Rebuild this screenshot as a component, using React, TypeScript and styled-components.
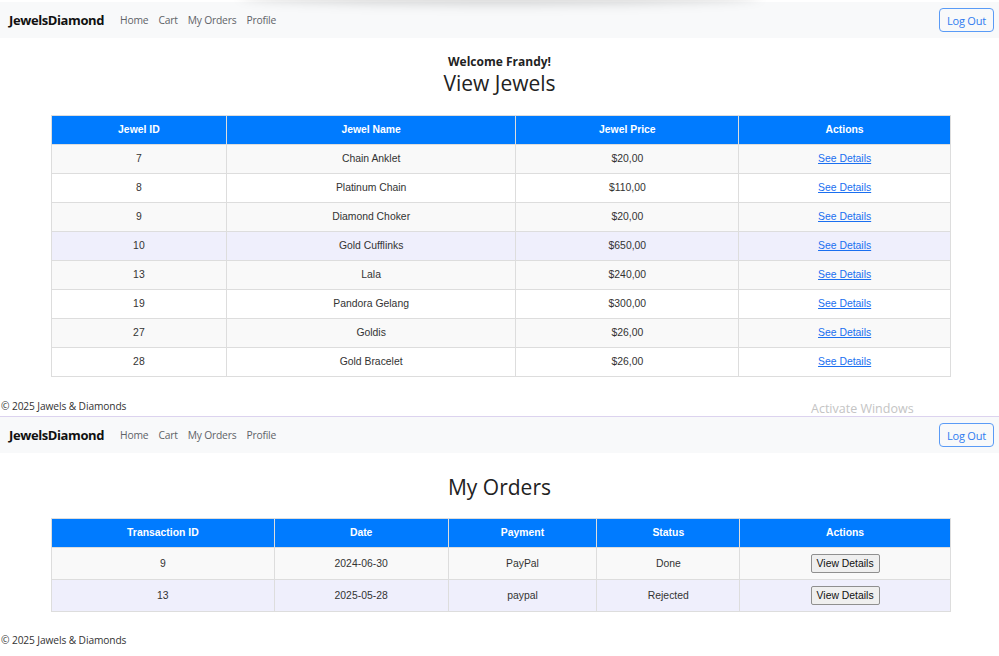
import React from "react";
import styled, { createGlobalStyle } from "styled-components";

const GlobalStyle = createGlobalStyle`
  html, body { margin: 0; padding: 0; background: #ffffff; }
  body { font-family: "Open Sans", "Noto Sans", sans-serif; color: #212529; }
  * { box-sizing: border-box; }
`;

const Page = styled.div`
  position: relative;
  width: 999px;
  height: 656px;
  overflow: hidden;
  display: flex;
  flex-direction: column;
`;

const TopShadow = styled.div`
  position: absolute;
  top: -14px;
  left: 240px;
  width: 520px;
  height: 18px;
  border-radius: 50%;
  background: rgba(0, 0, 0, 0.16);
  filter: blur(6px);
  pointer-events: none;
`;

const Section = styled.section<{ $top?: number }>`
  display: flex;
  flex-direction: column;
  padding-top: ${(p) => p.$top ?? 0}px;
`;

const Navbar = styled.nav<{ $line?: boolean }>`
  height: 36px;
  display: flex;
  align-items: center;
  padding: 0 5px 0 9px;
  background: #f8f9fa;
  border-top: ${(p) => (p.$line ? "1px solid #dcd3ef" : "none")};
  box-sizing: content-box;
`;

const Brand = styled.span`
  font-family: "Open Sans", sans-serif;
  font-weight: 700;
  font-size: 13px;
  color: #111;
  margin-right: 11px;
  letter-spacing: -0.4px;
`;

const NavLinks = styled.div`
  display: flex;
  flex: 1;
`;

const NavLink = styled.a`
  font-size: 10.3px;
  letter-spacing: -0.2px;
  color: #5f6368;
  padding: 0 5px;
  text-decoration: none;
`;

const LogOut = styled.button`
  height: 24px;
  width: 55px;
  padding: 0;
  border: 1px solid #5a9bf6;
  border-radius: 4px;
  background: transparent;
  color: #2f7cf0;
  font-family: "Open Sans", sans-serif;
  font-size: 11px;
  letter-spacing: -0.2px;
`;

const Welcome = styled.div`
  text-align: center;
  font-weight: 700;
  font-size: 12px;
  line-height: 16px;
  margin-top: 16px;
  color: #222;
`;

const Title = styled.h2<{ $mt: number; $mb: number }>`
  margin: ${(p) => p.$mt}px 0 ${(p) => p.$mb}px;
  text-align: center;
  font-weight: 500;
  font-size: 21px;
  line-height: 26px;
  color: #222;
`;

const Table = styled.table`
  width: 900px;
  margin: 0 0 0 51px;
  border-collapse: collapse;
  font-family: "Liberation Sans", Arial, sans-serif;
  font-size: 10.4px;
`;

const Col = styled.col<{ $w: number }>`
  width: ${(p) => p.$w}px;
`;

const Th = styled.th`
  background: #007bff;
  color: #ffffff;
  font-weight: 700;
  border: 1px solid #dddddd;
  padding: 8px;
  line-height: 12px;
  text-align: center;
`;

const Row = styled.tr<{ $bg: string }>`
  background: ${(p) => p.$bg};
`;

const Td = styled.td<{ $py: number }>`
  border: 1px solid #dddddd;
  padding: ${(p) => p.$py}px 8px;
  line-height: 12px;
  text-align: center;
  color: #333333;
`;

const DetailLink = styled.a`
  color: #1a6ff0;
  text-decoration: underline;
`;

const ViewButton = styled.button`
  height: 19px;
  padding: 0 5px;
  font-family: "Liberation Sans", Arial, sans-serif;
  font-size: 10.4px;
  color: #111;
  background: #efefef;
  border: 1px solid #8f8f8f;
  border-radius: 2px;
  vertical-align: middle;
`;

const Footer = styled.div<{ $mt: number }>`
  margin-top: ${(p) => p.$mt}px;
  padding-left: 1px;
  font-size: 10.2px;
  letter-spacing: -0.1px;
  line-height: 14px;
  color: #333;
`;

const Watermark = styled.div`
  position: absolute;
  left: 811px;
  top: 400px;
  font-size: 12.5px;
  color: #c4c4c4;
  pointer-events: none;
`;

const jewels = [
  { id: 7, name: "Chain Anklet", price: "$20,00" },
  { id: 8, name: "Platinum Chain", price: "$110,00" },
  { id: 9, name: "Diamond Choker", price: "$20,00" },
  { id: 10, name: "Gold Cufflinks", price: "$650,00" },
  { id: 13, name: "Lala", price: "$240,00" },
  { id: 19, name: "Pandora Gelang", price: "$300,00" },
  { id: 27, name: "Goldis", price: "$26,00" },
  { id: 28, name: "Gold Bracelet", price: "$26,00" },
];

const orders = [
  { id: 9, date: "2024-06-30", payment: "PayPal", status: "Done" },
  { id: 13, date: "2025-05-28", payment: "paypal", status: "Rejected" },
];

const NavBar: React.FC<{ line?: boolean }> = ({ line }) => (
  <Navbar $line={line}>
    <Brand>JewelsDiamond</Brand>
    <NavLinks>
      <NavLink>Home</NavLink>
      <NavLink>Cart</NavLink>
      <NavLink>My Orders</NavLink>
      <NavLink>Profile</NavLink>
    </NavLinks>
    <LogOut>Log Out</LogOut>
  </Navbar>
);

export default function App() {
  return (
    <Page>
      <GlobalStyle />
      <TopShadow />
      <Section $top={2}>
        <NavBar />
        <Welcome>Welcome Frandy!</Welcome>
        <Title $mt={0} $mb={19}>View Jewels</Title>
        <Table>
          <colgroup>
            <Col $w={175} />
            <Col $w={290} />
            <Col $w={223} />
            <Col $w={212} />
          </colgroup>
          <thead>
            <tr>
              <Th>Jewel ID</Th>
              <Th>Jewel Name</Th>
              <Th>Jewel Price</Th>
              <Th>Actions</Th>
            </tr>
          </thead>
          <tbody>
            {jewels.map((j, i) => (
              <Row key={j.id} $bg={j.id === 10 ? "#efeffc" : i % 2 === 0 ? "#f9f9f9" : "#ffffff"}>
                <Td $py={8}>{j.id}</Td>
                <Td $py={8}>{j.name}</Td>
                <Td $py={8}>{j.price}</Td>
                <Td $py={8}>
                  <DetailLink href="#">See Details</DetailLink>
                </Td>
              </Row>
            ))}
          </tbody>
        </Table>
        <Footer $mt={22}>© 2025 Jawels &amp; Diamonds</Footer>
      </Section>
      <Watermark>Activate Windows</Watermark>
      <Section $top={3}>
        <NavBar line />
        <Title $mt={21} $mb={18}>My Orders</Title>
        <Table>
          <colgroup>
            <Col $w={223} />
            <Col $w={174} />
            <Col $w={149} />
            <Col $w={143} />
            <Col $w={211} />
          </colgroup>
          <thead>
            <tr>
              <Th>Transaction ID</Th>
              <Th>Date</Th>
              <Th>Payment</Th>
              <Th>Status</Th>
              <Th>Actions</Th>
            </tr>
          </thead>
          <tbody>
            {orders.map((o, i) => (
              <Row key={o.id} $bg={i % 2 === 0 ? "#f9f9f9" : "#efeffc"}>
                <Td $py={6}>{o.id}</Td>
                <Td $py={6}>{o.date}</Td>
                <Td $py={6}>{o.payment}</Td>
                <Td $py={6}>{o.status}</Td>
                <Td $py={6}>
                  <ViewButton>View Details</ViewButton>
                </Td>
              </Row>
            ))}
          </tbody>
        </Table>
        <Footer $mt={21}>© 2025 Jawels &amp; Diamonds</Footer>
      </Section>
    </Page>
  );
}
